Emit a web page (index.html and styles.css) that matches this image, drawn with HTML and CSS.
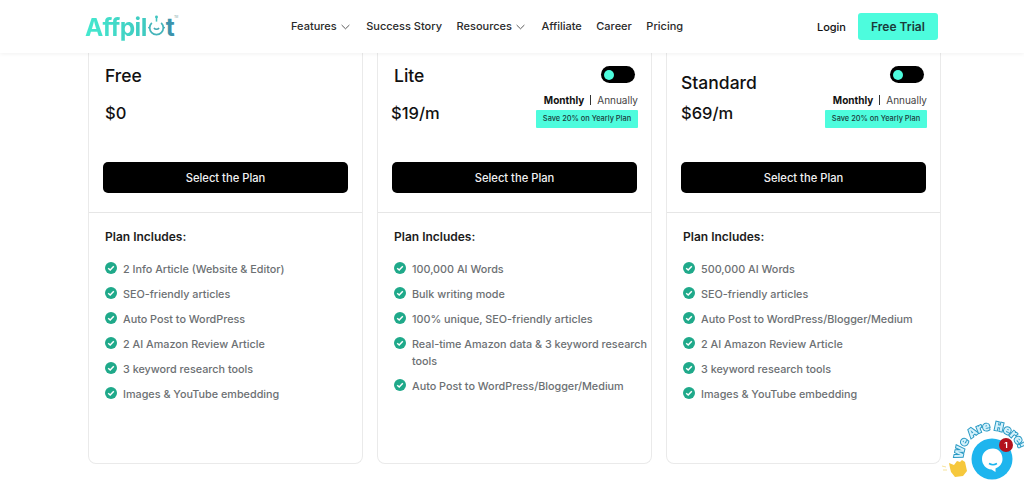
FILE: index.html
```html
<!DOCTYPE html>
<html lang="en">
<head>
    <meta charset="UTF-8">
    <meta name="viewport" content="width=device-width, initial-scale=1.0">
    <title>Affpilot - Pricing</title>
    <link rel="stylesheet" href="styles.css">
</head>
<body>
    <header class="site-header">
        <a class="logo" href="#">
            <span class="logo-text">Affpil</span>
            <svg class="logo-o" viewBox="0 0 20 24" width="17" height="22">
                <path d="M10 2v6" stroke="#3fc4c0" stroke-width="1.800" fill="none"/>
                <circle cx="10" cy="2.500" r="1.700" fill="#3fc4c0"/>
                <path d="M4.500 9.500a8 8 0 1 0 11 0" stroke="#45b4ba" stroke-width="2" fill="none"/>
                <path d="M7 15.500a3.600 3.600 0 0 0 6 0" stroke="#45a8b4" stroke-width="1.800" fill="none"/>
                <circle cx="1" cy="15" r="1" fill="#45b4ba"/>
                <circle cx="19" cy="15" r="1" fill="#45a8b4"/>
            </svg>
            <span class="logo-t">t</span>
            <sup class="logo-tm">TM</sup>
        </a>
        <nav class="main-nav">
            <a href="#">Features<svg class="caret" viewBox="0 0 10 6" width="9" height="6"><path d="M.7.8 5 5 9.300.8" fill="none" stroke="#333" stroke-width=".9"/></svg></a>
            <a href="#">Success Story</a>
            <a href="#">Resources<svg class="caret" viewBox="0 0 10 6" width="9" height="6"><path d="M.7.8 5 5 9.300.8" fill="none" stroke="#333" stroke-width=".9"/></svg></a>
            <a href="#">Affiliate</a>
            <a href="#">Career</a>
            <a href="#">Pricing</a>
        </nav>
        <div class="header-actions">
            <a class="login" href="#">Login</a>
            <a class="trial-btn" href="#">Free Trial</a>
        </div>
    </header>

    <main class="plans">
        <section class="plan">
            <div class="plan-top">
                <div class="plan-head plan-head-free">
                    <div>
                        <h2>Free</h2>
                        <p class="price price-free">$0</p>
                    </div>
                </div>
                <a class="select-btn" href="#">Select the Plan</a>
            </div>
            <div class="plan-body">
                <h3>Plan Includes:</h3>
                <ul>
                    <li><svg class="check" viewBox="0 0 12 12"><circle cx="6" cy="6" r="6"/><path d="M3.200 6.200 5.200 8l3.600-3.700"/></svg>2 Info Article (Website &amp; Editor)</li>
                    <li><svg class="check" viewBox="0 0 12 12"><circle cx="6" cy="6" r="6"/><path d="M3.200 6.200 5.200 8l3.600-3.700"/></svg>SEO-friendly articles</li>
                    <li><svg class="check" viewBox="0 0 12 12"><circle cx="6" cy="6" r="6"/><path d="M3.200 6.200 5.200 8l3.600-3.700"/></svg>Auto Post to WordPress</li>
                    <li><svg class="check" viewBox="0 0 12 12"><circle cx="6" cy="6" r="6"/><path d="M3.200 6.200 5.200 8l3.600-3.700"/></svg>2 AI Amazon Review Article</li>
                    <li><svg class="check" viewBox="0 0 12 12"><circle cx="6" cy="6" r="6"/><path d="M3.200 6.200 5.200 8l3.600-3.700"/></svg>3 keyword research tools</li>
                    <li><svg class="check" viewBox="0 0 12 12"><circle cx="6" cy="6" r="6"/><path d="M3.200 6.200 5.200 8l3.600-3.700"/></svg>Images &amp; YouTube embedding</li>
                </ul>
            </div>
        </section>

        <section class="plan">
            <div class="plan-top">
                <div class="plan-head">
                    <div class="plan-name">
                        <h2>Lite</h2>
                        <p class="price price-lite">$19/m</p>
                    </div>
                    <div class="billing">
                        <span class="toggle"><span class="knob"></span></span>
                        <p class="period"><b>Monthly</b><i></i>Annually</p>
                        <span class="save">Save 20% on Yearly Plan</span>
                    </div>
                </div>
                <a class="select-btn" href="#">Select the Plan</a>
            </div>
            <div class="plan-body">
                <h3>Plan Includes:</h3>
                <ul>
                    <li><svg class="check" viewBox="0 0 12 12"><circle cx="6" cy="6" r="6"/><path d="M3.200 6.200 5.200 8l3.600-3.700"/></svg>100,000 AI Words</li>
                    <li><svg class="check" viewBox="0 0 12 12"><circle cx="6" cy="6" r="6"/><path d="M3.200 6.200 5.200 8l3.600-3.700"/></svg>Bulk writing mode</li>
                    <li><svg class="check" viewBox="0 0 12 12"><circle cx="6" cy="6" r="6"/><path d="M3.200 6.200 5.200 8l3.600-3.700"/></svg>100% unique, SEO-friendly articles</li>
                    <li><svg class="check" viewBox="0 0 12 12"><circle cx="6" cy="6" r="6"/><path d="M3.200 6.200 5.200 8l3.600-3.700"/></svg>Real-time Amazon data &amp; 3 keyword research tools</li>
                    <li><svg class="check" viewBox="0 0 12 12"><circle cx="6" cy="6" r="6"/><path d="M3.200 6.200 5.200 8l3.600-3.700"/></svg>Auto Post to WordPress/Blogger/Medium</li>
                </ul>
            </div>
        </section>

        <section class="plan">
            <div class="plan-top">
                <div class="plan-head">
                    <div class="plan-name plan-name-standard">
                        <h2>Standard</h2>
                        <p class="price">$69/m</p>
                    </div>
                    <div class="billing">
                        <span class="toggle"><span class="knob"></span></span>
                        <p class="period"><b>Monthly</b><i></i>Annually</p>
                        <span class="save">Save 20% on Yearly Plan</span>
                    </div>
                </div>
                <a class="select-btn" href="#">Select the Plan</a>
            </div>
            <div class="plan-body">
                <h3>Plan Includes:</h3>
                <ul>
                    <li><svg class="check" viewBox="0 0 12 12"><circle cx="6" cy="6" r="6"/><path d="M3.200 6.200 5.200 8l3.600-3.700"/></svg>500,000 AI Words</li>
                    <li><svg class="check" viewBox="0 0 12 12"><circle cx="6" cy="6" r="6"/><path d="M3.200 6.200 5.200 8l3.600-3.700"/></svg>SEO-friendly articles</li>
                    <li><svg class="check" viewBox="0 0 12 12"><circle cx="6" cy="6" r="6"/><path d="M3.200 6.200 5.200 8l3.600-3.700"/></svg>Auto Post to WordPress/Blogger/Medium</li>
                    <li><svg class="check" viewBox="0 0 12 12"><circle cx="6" cy="6" r="6"/><path d="M3.200 6.200 5.200 8l3.600-3.700"/></svg>2 AI Amazon Review Article</li>
                    <li><svg class="check" viewBox="0 0 12 12"><circle cx="6" cy="6" r="6"/><path d="M3.200 6.200 5.200 8l3.600-3.700"/></svg>3 keyword research tools</li>
                    <li><svg class="check" viewBox="0 0 12 12"><circle cx="6" cy="6" r="6"/><path d="M3.200 6.200 5.200 8l3.600-3.700"/></svg>Images &amp; YouTube embedding</li>
                </ul>
            </div>
        </section>
    </main>

    <div class="chat-widget">
        <svg viewBox="0 0 90 80" width="90" height="80">
            <defs><path id="chatArc" d="M29 47A29 29 0 0 1 87 47"/></defs>
            <text class="chat-label"><textPath href="#chatArc">We Are Here!</textPath></text>
            <path d="M15 51l5 2 3-4 3 1 2-2 3 2 2 9-4 5-8 1-4-5-1-4z" fill="#f6c83c"/>
            <path d="M8 54l4 1M9 58l4 0" stroke="#f6e39c" stroke-width="1" fill="none"/>
            <circle cx="58" cy="47" r="20.500" fill="#1eb5ee"/>
            <path d="M59 36.500c-6.500 0-11 4.500-11 10.500 0 5.500 4 10 9.500 10.500l4 2.500v-3.500c4-1.500 7-5 7-9.500 0-6-4-10.500-9.500-10.500z" fill="#fff"/>
            <path d="M55 51.500q4 2.500 8 0" fill="none" stroke="#1eb5ee" stroke-width="1.500"/>
            <circle cx="72" cy="33" r="7" fill="#b3121d"/>
            <text class="chat-count" x="72" y="36">1</text>
        </svg>
    </div>
</body>
</html>
```

FILE: styles.css
```css
* {
    box-sizing: border-box;
}
body {
    margin: 0;
    height: 492px;
    overflow: hidden;
    background-color: #fff;
    font-family: Inter, "Liberation Sans", sans-serif;
    color: #111;
}
a {
    color: inherit;
    text-decoration: none;
}

/* header */
.site-header {
    position: relative;
    z-index: 2;
    display: flex;
    align-items: center;
    height: 53px;
    padding: 0 86px 0 85px;
    background-color: #fff;
    box-shadow: 0 1px 4px rgba(0,0,0,0.06);
}
.logo {
    display: flex;
    align-items: center;
    width: 206px;
    height: 30px;
    font-size: 24.500px;
    font-weight: 700;
    letter-spacing: -0.6px;
}
.logo-text {
    background: linear-gradient(90deg, #45e9cf, #3fc9c0);
    -webkit-background-clip: text;
    background-clip: text;
    color: transparent;
}
.logo-t {
    color: #3c93ac;
}
.logo-o {
    margin: -4px 1px 0;
}
.logo-tm {
    align-self: flex-start;
    margin-top: 3px;
    font-size: 3px;
    font-weight: 400;
    color: #8aa;
}
.main-nav {
    display: flex;
    gap: 14.500px;
    padding-bottom: 1px;
    font-size: 11px;
    font-weight: 500;
    color: #2a2a2a;
}
.caret {
    margin: 0 2px 0 4px;
}
.header-actions {
    display: flex;
    align-items: center;
    gap: 12px;
    margin-left: auto;
    font-size: 12px;
    font-weight: 500;
}
.login {
    font-size: 11px;
}
.trial-btn {
    display: flex;
    align-items: center;
    justify-content: center;
    width: 80px;
    height: 27px;
    background-color: #4dfcdd;
    border-radius: 3px;
    font-weight: 600;
    color: #1c3a3a;
}

/* pricing cards */
.plans {
    display: grid;
    grid-template-columns: repeat(3, 275px);
    gap: 14px;
    padding-left: 88px;
}
.plan {
    height: 411px;
    border: 1px solid #eaeaea;
    border-top: 0;
    border-radius: 0 0 8px 8px;
}
.plan-top {
    height: 160px;
    padding: 0 14px;
    border-bottom: 1px solid #e6e6e6;
}
.plan-head {
    display: flex;
    justify-content: space-between;
    height: 109px;
}
.plan-head-free {
    padding: 13px 0 0 2px;
}
.plan-name {
    padding-top: 13px;
}
.plan-name h2 {
    padding-left: 2px;
}
.plan-name-standard {
    padding-top: 20px;
}
.plan-name-standard h2 {
    padding-left: 0;
}
h2 {
    margin: 0;
    font-size: 17.500px;
    font-weight: 500;
    line-height: 20px;
}
.price {
    margin: 17px 0 0;
    font-size: 16.500px;
    font-weight: 500;
    line-height: 20px;
}
.price-lite {
    margin-left: -1px;
}
.plan-name-standard .price {
    margin-top: 10px;
}
.billing {
    display: flex;
    flex-direction: column;
    align-items: flex-end;
    padding-top: 13px;
    margin-right: -1px;
}
.toggle {
    display: block;
    width: 34px;
    height: 17px;
    margin-right: 3px;
    padding: 4px 0 0 3px;
    background-color: #000;
    border-radius: 9px;
}
.knob {
    display: block;
    width: 10px;
    height: 10px;
    background-color: #4dfcdd;
    border-radius: 50%;
}
.period {
    display: flex;
    align-items: center;
    margin: 10px 0 0;
    font-size: 10px;
    line-height: 14px;
    color: #444;
}
.period b {
    font-weight: 700;
    color: #111;
}
.period i {
    width: 1px;
    height: 10px;
    margin: 0 6px;
    background-color: #333;
}
.save {
    display: block;
    margin-top: 3px;
    width: 102px;
    height: 18px;
    background-color: #4dfcdd;
    border-radius: 1px;
    font-size: 7.400px;
    font-weight: 500;
    line-height: 18px;
    text-align: center;
    color: #1b3b3b;
    white-space: nowrap;
}
.select-btn {
    display: flex;
    align-items: center;
    justify-content: center;
    height: 31px;
    background-color: #000;
    border-radius: 5px;
    font-size: 11.200px;
    font-weight: 500;
    color: #f2f2f2;
}
.plan-body {
    padding: 15px 0 0 16px;
}
h3 {
    margin: 0 0 15px;
    font-size: 12px;
    font-weight: 600;
    line-height: 18px;
    color: #1c1c1c;
}
ul {
    margin: 0;
    padding: 0;
    list-style: none;
    font-size: 10.800px;
    font-weight: 500;
    line-height: 17px;
    color: #6c7073;
}
li {
    position: relative;
    margin-bottom: 8px;
    padding-left: 18px;
}
.check {
    position: absolute;
    left: 0;
    top: 1px;
    width: 12px;
    height: 12px;
}
.check circle {
    fill: #1fa98a;
}
.check path {
    fill: none;
    stroke: #fff;
    stroke-width: 1.500;
}

/* chat bubble */
.chat-widget {
    position: fixed;
    right: 0;
    bottom: 0;
    width: 90px;
    height: 80px;
}
.chat-label {
    font-family: "Open Sans", sans-serif;
    font-size: 11.800px;
    font-weight: 800;
    fill: #d4f1fb;
    stroke: #2a9ac4;
    stroke-width: 2px;
    paint-order: stroke;
}
.chat-count {
    fill: #fff;
    font-size: 8px;
    font-weight: 700;
    text-anchor: middle;
}
```
